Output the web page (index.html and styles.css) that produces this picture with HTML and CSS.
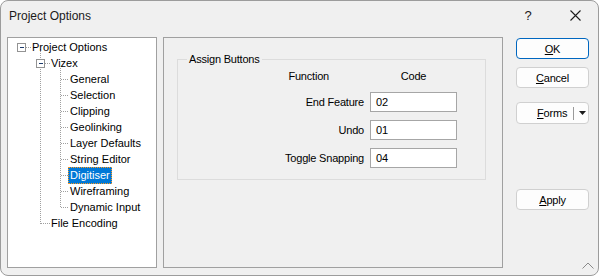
FILE: index.html
```html
<!DOCTYPE html>
<html>
<head>
<meta charset="utf-8">
<link rel="stylesheet" href="styles.css">
</head>
<body>
<div class="window">
  <div class="titlebar">
    <span class="title">Project Options</span>
    <span class="help">?</span>
    <span class="close"><svg width="11" height="11" viewBox="0 0 11 11"><path d="M0.5 0.5 L10.5 10.5 M10.5 0.5 L0.5 10.5" stroke="#1b1b1b" stroke-width="1.1" fill="none"/></svg></span>
  </div>
  <div class="body">
    <div class="tree">
      <svg class="tree-lines" width="148" height="229" viewBox="0 0 148 229">
        <g stroke="#a0a0a0" stroke-width="1" stroke-dasharray="1 1" fill="none" shape-rendering="crispEdges">
          <path d="M18 9.5 H24"/>
          <path d="M32.5 11 V21 M32.5 31 V186"/>
          <path d="M37 25.5 H43"/>
          <path d="M33 185.5 H43"/>
          <path d="M52.5 30 V170"/>
          <path d="M53 41.5 H61 M53 57.5 H61 M53 73.5 H61 M53 89.5 H61 M53 105.5 H61 M53 121.5 H61 M53 137.5 H61 M53 153.5 H61 M53 169.5 H61"/>
        </g>
        <g shape-rendering="crispEdges">
          <rect x="9.5" y="5.5" width="8" height="8" fill="#fff" stroke="#939393"/>
          <path d="M11.5 9.5 H16" stroke="#1c3a6b"/>
          <rect x="28.5" y="21.5" width="8" height="8" fill="#fff" stroke="#939393"/>
          <path d="M30.5 25.5 H35" stroke="#1c3a6b"/>
        </g>
      </svg>
      <ul class="tree-list">
        <li class="row lvl0"><span>Project Options</span></li>
        <li class="row lvl1"><span>Vizex</span></li>
        <li class="row lvl2"><span>General</span></li>
        <li class="row lvl2"><span>Selection</span></li>
        <li class="row lvl2"><span>Clipping</span></li>
        <li class="row lvl2"><span>Geolinking</span></li>
        <li class="row lvl2"><span>Layer Defaults</span></li>
        <li class="row lvl2"><span>String Editor</span></li>
        <li class="row lvl2"><span class="selected">Digitiser</span></li>
        <li class="row lvl2"><span>Wireframing</span></li>
        <li class="row lvl2"><span>Dynamic Input</span></li>
        <li class="row lvl1"><span>File Encoding</span></li>
      </ul>
    </div>
    <div class="panel">
      <fieldset class="group">
        <legend>Assign Buttons</legend>
        <div class="grid">
          <div class="head-fn">Function</div>
          <div class="head-code">Code</div>
          <div class="label">End Feature</div>
          <div class="input">02</div>
          <div class="label">Undo</div>
          <div class="input">01</div>
          <div class="label">Toggle Snapping</div>
          <div class="input">04</div>
        </div>
      </fieldset>
    </div>
    <div class="buttons">
      <div class="btn btn-ok"><span><u>O</u>K</span></div>
      <div class="btn btn-cancel"><span><u>C</u>ancel</span></div>
      <div class="btn btn-forms"><span><u>F</u>orms</span><span class="sep"></span><svg class="arrow" width="7" height="4" viewBox="0 0 7 4"><path d="M0 0 H7 L3.5 4 Z" fill="#1b1b1b"/></svg></div>
      <div class="btn btn-apply"><span><u>A</u>pply</span></div>
    </div>
  </div>
  <svg class="grip" width="12" height="7" viewBox="0 0 12 7"><path d="M0.5 6.5 L6 1 L11.5 6.5" stroke="#8a8a8a" stroke-width="1" fill="none"/></svg>
</div>
</body>
</html>
```
FILE: styles.css
```css
html, body {
  margin: 0;
  padding: 0;
  background: #ffffff;
}
body {
  width: 599px;
  height: 276px;
  font-family: "Liberation Sans", Arial, sans-serif;
  font-size: 11px;
  color: #000;
}
.window {
  box-sizing: border-box;
  width: 599px;
  height: 276px;
  border: 1px solid #9c9c9c;
  border-radius: 8px;
  background: #f0f0f0;
  display: flex;
  flex-direction: column;
  position: relative;
  overflow: hidden;
}
.titlebar {
  height: 29px;
  flex: none;
  display: flex;
  align-items: center;
  padding-left: 8px;
  font-size: 12px;
  color: #1a1a1a;
}
.title {
  flex: 1;
}
.help {
  width: 46px;
  text-align: center;
  font-size: 13px;
  padding-right: 2px;
  box-sizing: border-box;
}
.close {
  width: 46px;
  display: flex;
  justify-content: center;
  align-items: center;
}
.body {
  display: flex;
  padding: 7px 0 0 6px;
}
.tree {
  box-sizing: border-box;
  width: 150px;
  height: 231px;
  border: 1px solid #a0a0a0;
  background: #fff;
  position: relative;
}
.tree-lines {
  position: absolute;
  left: 0;
  top: 0;
}
.tree-list {
  list-style: none;
  margin: 0;
  padding: 1px 0 0 0;
  position: relative;
}
.row {
  height: 16px;
  display: flex;
  align-items: center;
  white-space: nowrap;
}
.row span {
  padding: 0 1px;
  line-height: 15px;
  border: 1px solid transparent;
}
.lvl0 { padding-left: 22px; }
.lvl1 { padding-left: 41px; }
.lvl2 { padding-left: 60px; }
.row span.selected {
  background: #0078d7;
  color: #fff;
  border: 1px dotted #ff9a1e;
}
.panel {
  box-sizing: border-box;
  margin-left: 6px;
  width: 340px;
  height: 231px;
  border: 1px solid #a0a0a0;
  background: #f0f0f0;
  letter-spacing: -0.2px;
}
.group {
  margin: 14px 16px 0 13px;
  padding: 2px 28px 11px 9px;
  border: 1px solid #dcdcdc;
  min-width: 0;
}
.group legend {
  padding: 0 2px;
  line-height: 14px;
}
.grid {
  display: grid;
  grid-template-columns: 177px 87px;
  grid-template-rows: 16px 20px 20px 20px;
  column-gap: 6px;
  row-gap: 8px;
}
.head-fn {
  text-align: right;
  padding-right: 35px;
  align-self: center;
}
.head-code {
  text-align: center;
  align-self: center;
}
.label {
  text-align: right;
  align-self: center;
}
.input {
  box-sizing: border-box;
  height: 20px;
  border: 1px solid #a6a6a6;
  background: #fff;
  padding-left: 5px;
  display: flex;
  align-items: center;
}
.buttons {
  margin-left: 13px;
  width: 73px;
  display: flex;
  flex-direction: column;
  letter-spacing: -0.2px;
}
.btn {
  box-sizing: border-box;
  height: 21px;
  border: 1px solid #d0d0d0;
  border-radius: 4px;
  background: #fdfdfd;
  display: flex;
  align-items: center;
  justify-content: center;
}
.btn-ok {
  margin-top: 1px;
  border-color: #0067c0;
}
.btn-cancel {
  margin-top: 8px;
}
.btn-forms {
  margin-top: 14px;
  height: 22px;
  justify-content: flex-start;
  padding-left: 20px;
}
.btn-forms .sep {
  width: 1px;
  height: 13px;
  background: #9a9a9a;
  margin-left: 6px;
}
.btn-forms .arrow {
  margin-left: 5px;
}
.btn-apply {
  margin-top: 65px;
}
.grip {
  position: absolute;
  right: 4px;
  bottom: 6px;
}
```
